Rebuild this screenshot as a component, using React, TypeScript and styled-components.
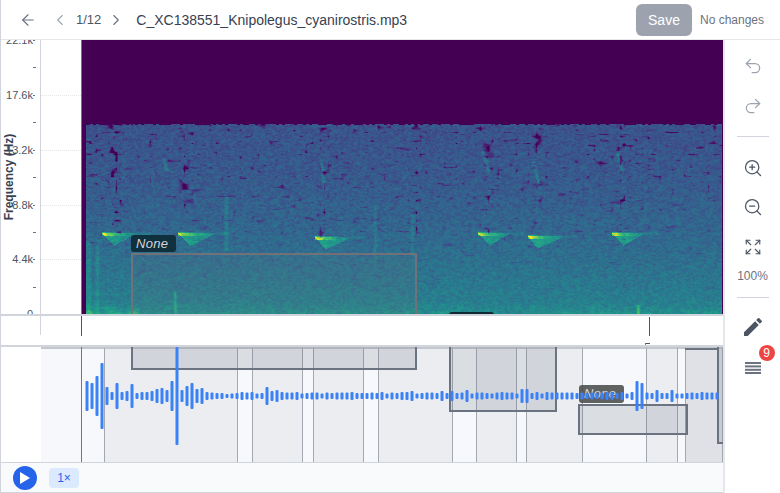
import React, { useEffect, useRef } from 'react'
import styled, { createGlobalStyle } from 'styled-components'
import { ArrowLeft, ChevronLeft, ChevronRight, Expand, Redo2, Undo2, ZoomIn, ZoomOut } from 'lucide-react'

const GlobalStyle = createGlobalStyle`
  html, body {
    margin: 0;
    padding: 0;
    background: #fff;
    font-family: "Liberation Sans", Arial, sans-serif;
  }
`

const Page = styled.div`
  width: 780px;
  height: 493px;
  display: flex;
  flex-direction: column;
  box-sizing: border-box;
  border-left: 1px solid #d1d5db;
  overflow: hidden;
`

const Header = styled.header`
  height: 40px;
  flex: none;
  box-sizing: border-box;
  display: flex;
  align-items: center;
  padding-left: 18px;
  border-bottom: 1px solid #e5e7eb;
  color: #4b5563;
`

const IconSlot = styled.span<{ $color?: string; $ml?: number }>`
  display: flex;
  color: ${(p) => p.$color ?? '#6b7280'};
  margin-left: ${(p) => p.$ml ?? 0}px;
`

const Pager = styled.span`
  font-size: 13px;
  margin: 0 6px 0 7px;
  color: #4b5563;
`

const Title = styled.span`
  font-size: 14px;
  margin-left: 11px;
  color: #374151;
  flex: 1;
`

const SaveButton = styled.button`
  width: 56px;
  height: 32px;
  border: 0;
  border-radius: 6px;
  background: #9ca3af;
  color: #fff;
  font: 14px "Liberation Sans", Arial, sans-serif;
`

const Status = styled.span`
  font-size: 12px;
  color: #6b7280;
  width: 88px;
  text-align: left;
  padding-left: 8px;
  box-sizing: border-box;
`

const Body = styled.div`
  flex: 1;
  min-height: 0;
  display: flex;
`

const Main = styled.main`
  width: 724px;
  flex: none;
  box-sizing: border-box;
  display: flex;
  flex-direction: column;
  border-right: 2px solid #e5e7eb;
`

const SpecRow = styled.div`
  height: 274px;
  flex: none;
  display: flex;
  overflow: hidden;
`

const Axis = styled.div`
  width: 40px;
  flex: none;
  box-sizing: border-box;
  position: relative;
  border-right: 1px solid #d1d5db;
`

const AxisTitle = styled.span`
  position: absolute;
  left: 8px;
  top: 137px;
  transform: translate(-50%, -50%) rotate(-90deg);
  white-space: nowrap;
  font-size: 12px;
  font-weight: 700;
  color: #374151;
`

const AxisLabel = styled.span<{ $y: number }>`
  position: absolute;
  right: 7px;
  top: ${(p) => p.$y}px;
  transform: translateY(-50%);
  font-size: 11px;
  color: #4b5563;
`

const AxisTick = styled.span<{ $y: number; $minor?: boolean }>`
  position: absolute;
  right: ${(p) => (p.$minor ? 4 : 5)}px;
  top: ${(p) => p.$y}px;
  width: ${(p) => (p.$minor ? 3 : 2)}px;
  height: 1px;
  background: #6b7280;
`

const Gutter = styled.div`
  width: 40px;
  flex: none;
  position: relative;
`

const GridLine = styled.span<{ $y: number }>`
  position: absolute;
  left: 0;
  right: 0;
  top: ${(p) => p.$y}px;
  border-top: 1px dotted #e5e7eb;
`

const SpecPane = styled.div`
  flex: 1;
  position: relative;
  border-left: 1px solid #ef4444;
`

const SpecCanvas = styled.canvas`
  display: block;
`

const SpecBox = styled.div<{ $x: number; $y: number; $w: number; $h: number }>`
  position: absolute;
  left: ${(p) => p.$x}px;
  top: ${(p) => p.$y}px;
  width: ${(p) => p.$w}px;
  height: ${(p) => p.$h}px;
  box-sizing: border-box;
  border: 2px solid #71717a;
  background: rgba(113, 113, 122, 0.14);
`

const Tag = styled.span<{ $x: number; $y: number; $w: number; $h: number; $bg: string; $fg: string }>`
  position: absolute;
  left: ${(p) => p.$x}px;
  top: ${(p) => p.$y}px;
  width: ${(p) => p.$w}px;
  height: ${(p) => p.$h}px;
  box-sizing: border-box;
  padding-left: 5px;
  border-radius: 3px;
  background: ${(p) => p.$bg};
  color: ${(p) => p.$fg};
  font-size: 13px;
  font-style: italic;
  line-height: ${(p) => p.$h}px;
  letter-spacing: 0.3px;
`

const Timeline = styled.div`
  height: 33px;
  flex: none;
  box-sizing: border-box;
  position: relative;
  border-top: 2px solid #d1d5db;
  border-bottom: 2px solid #d1d5db;
`

const TimelineEdge = styled.span`
  position: absolute;
  left: 39px;
  top: 0;
  height: 19px;
  width: 1px;
  background: #d1d5db;
`

const TimeTick = styled.span<{ $x: number; $h: number; $top: number }>`
  position: absolute;
  left: ${(p) => p.$x}px;
  top: ${(p) => p.$top}px;
  width: 1px;
  height: ${(p) => p.$h}px;
  background: #4b5563;
`

const TimeText = styled.span`
  position: absolute;
  left: 644px;
  top: 27px;
  width: 5px;
  height: 2px;
  border-top: 1px solid #57534e;
  border-left: 1px solid #d97706;
  box-sizing: border-box;
`

const Wave = styled.div`
  height: 115px;
  flex: none;
  display: flex;
  position: relative;
  overflow: hidden;
`

const WaveGap = styled.div`
  width: 40px;
  flex: none;
`

const WaveTrack = styled.div`
  flex: 1;
  position: relative;
  display: flex;
  background: #f7f8fb;
`

const Band = styled.div<{ $w: number; $tone: 'light' | 'mid' | 'dark' }>`
  width: ${(p) => p.$w}px;
  flex: none;
  box-sizing: border-box;
  border-right: 1px solid #a3a7b0;
  border-top: 2px solid #c4c7ce;
  background: ${(p) =>
    p.$tone === 'light' ? '#f7f8fb' : p.$tone === 'mid' ? '#ecedf1' : '#dfe1e6'};
`

const RedLine = styled.span`
  position: absolute;
  left: 80px;
  top: 0;
  bottom: 0;
  width: 1px;
  background: #dc4a4a;
`

const WaveBox = styled.div<{ $x: number; $y: number; $w: number; $h: number }>`
  position: absolute;
  left: ${(p) => p.$x}px;
  top: ${(p) => p.$y}px;
  width: ${(p) => p.$w}px;
  height: ${(p) => p.$h}px;
  box-sizing: border-box;
  border: 2px solid #6b7280;
  background: rgba(107, 114, 128, 0.2);
`

const WaveEdge = styled.span<{ $x: number; $y: number; $w: number }>`
  position: absolute;
  left: ${(p) => p.$x}px;
  top: ${(p) => p.$y}px;
  width: ${(p) => p.$w}px;
  height: 2px;
  background: #6b7280;
`

const WaveSvg = styled.svg`
  position: absolute;
  left: 0;
  top: 0;
`

const Footer = styled.footer`
  height: 31px;
  flex: none;
  box-sizing: border-box;
  display: flex;
  align-items: center;
  padding-left: 12px;
  gap: 12px;
  background: #f9fafb;
  border-top: 1px solid #d1d5db;
  border-bottom: 1px solid #d1d5db;
`

const PlayButton = styled.span`
  width: 24px;
  height: 24px;
  border-radius: 50%;
  background: #2563eb;
  display: flex;
  align-items: center;
  justify-content: center;
`

const SpeedChip = styled.span`
  width: 30px;
  height: 20px;
  border-radius: 4px;
  background: #dbeafe;
  color: #2563eb;
  font-size: 12px;
  line-height: 20px;
  text-align: center;
`

const Toolbar = styled.aside`
  flex: 1;
  display: flex;
  flex-direction: column;
  align-items: center;
  padding-top: 14px;
  color: #4b5563;
`

const ToolSlot = styled.div<{ $h: number; $muted?: boolean; $mt?: number }>`
  height: ${(p) => p.$h}px;
  margin-top: ${(p) => p.$mt ?? 0}px;
  flex: none;
  display: flex;
  align-items: center;
  justify-content: center;
  position: relative;
  color: ${(p) => (p.$muted ? '#9ca3af' : '#4b5563')};
`

const Divider = styled.hr<{ $mt: number }>`
  width: 32px;
  margin: ${(p) => p.$mt}px 0 0;
  border: 0;
  border-top: 1px solid #d1d5db;
`

const Percent = styled.span`
  font-size: 12px;
  color: #6b7280;
  line-height: 14px;
  margin-top: 12px;
`

const Badge = styled.span`
  position: absolute;
  left: 14px;
  top: -11px;
  width: 16px;
  height: 16px;
  border-radius: 50%;
  background: #ef4444;
  color: #fff;
  font-size: 12px;
  line-height: 16px;
  text-align: center;
`

const viridis = [
  [68, 1, 84],
  [72, 40, 120],
  [62, 74, 137],
  [49, 104, 142],
  [38, 130, 142],
  [31, 158, 137],
  [53, 183, 121],
  [110, 206, 88],
  [253, 231, 37],
]

const colorAt = (v: number) => {
  const t = Math.max(0, Math.min(0.9999, v)) * (viridis.length - 1)
  const i = Math.floor(t)
  const f = t - i
  return viridis[i].map((c, k) => c + (viridis[i + 1][k] - c) * f)
}

const hash = (x: number, y: number) => {
  let h = (Math.imul(x, 374761393) + Math.imul(y, 668265263)) | 0
  h = Math.imul(h ^ (h >>> 13), 1274126177)
  return ((h ^ (h >>> 16)) >>> 0) / 4294967296
}

const smooth = (x: number, y: number) => {
  const xi = Math.floor(x)
  const yi = Math.floor(y)
  const fx = x - xi
  const fy = y - yi
  const a = hash(xi, yi) * (1 - fx) + hash(xi + 1, yi) * fx
  const b = hash(xi, yi + 1) * (1 - fx) + hash(xi + 1, yi + 1) * fx
  return a * (1 - fy) + b * fy
}

// bird calls, x and y in page coordinates
const calls = [
  { x: 102, y: 233, len: 34, apex: 12 },
  { x: 178, y: 233, len: 38, apex: 12 },
  { x: 315, y: 237, len: 36, apex: 10 },
  { x: 478, y: 233, len: 32, apex: 11 },
  { x: 528, y: 236, len: 36, apex: 9 },
  { x: 612, y: 233, len: 32, apex: 11 },
]
const streaks = [
  { x: 226, top: 195, bottom: 250, a: 0.1, slope: 0 },
  { x: 175, top: 292, bottom: 314, a: 0.2, slope: 0 },
  { x: 97, top: 240, bottom: 314, a: 0.1, slope: 0 },
  { x: 375, top: 205, bottom: 265, a: 0.08, slope: 0 },
  { x: 412, top: 215, bottom: 255, a: 0.09, slope: 0 },
  { x: 483, top: 151, bottom: 170, a: 0.16, slope: 0.25 },
  { x: 321, top: 160, bottom: 182, a: 0.13, slope: 0.1 },
  { x: 533, top: 159, bottom: 184, a: 0.16, slope: 0.2 },
  { x: 617, top: 151, bottom: 170, a: 0.17, slope: 0.25 },
  { x: 163, top: 158, bottom: 170, a: 0.15, slope: 0.3 },
  { x: 638, top: 305, bottom: 314, a: 0.22, slope: 0 },
]
const holes = [111, 118, 184, 323, 416, 488, 537, 622]

const drawSpectrogram = (canvas: HTMLCanvasElement) => {
  const ctx = canvas.getContext('2d')
  if (!ctx) return
  const W = canvas.width
  const H = canvas.height
  const img = ctx.createImageData(W, H)
  for (let py = 0; py < H; py++) {
    for (let px = 0; px < W; px++) {
      const x = px + 82
      const y = py + 40
      const edge = 124 + (hash(Math.floor(x / 3), 3) > 0.6 ? 1 : 0)
      let v = 0
      if (y >= edge && x >= 86 && x < 722) {
        const d = (y - 124) / 190
        v = 0.29 + d * d * 0.17 + d * 0.05
        v += (smooth(x / 2.2, y / 1.4) - 0.5) * 0.14
        v += (hash(x, y) - 0.5) * 0.05
        // short dark dashes, the quiet bits of the recording
        const dash = smooth(x / 6, y / 2.2)
        if (dash < 0.24) v -= (0.24 - dash) * 1.3 * (1.1 - d)
        if (x < 91 && y > 240) v += 0.08
        for (const h of holes) {
          const off = Math.abs(x - h)
          if (off < 7 && y < 240) {
            const n = smooth(x / 4, y / 4)
            if (n < 0.36) v -= (0.36 - n) * 1.5 * (1 - off / 7)
          }
        }
        for (const s of streaks) {
          if (y >= s.top && y <= s.bottom) {
            const dx = Math.abs(x - s.x - (y - s.top) * s.slope)
            if (dx < 3) v += s.a * (1 - dx / 3)
          }
        }
        for (const c of calls) {
          const dx = x - c.x
          const dy = y - c.y
          if (dx >= 0 && dx < c.len) {
            const depth = dx < c.apex ? (dx / c.apex) * 12 : 12 * (1 - (dx - c.apex) / (c.len - c.apex))
            if (dy >= 0 && dy <= depth) v += 0.26 - (dx / c.len) * 0.1
            if (dy >= -1 && dy <= 2) {
              const f = 1 - dx / c.len
              v += 0.38 * f * f
            }
          } else if (dx >= c.len && dx < c.len + 14 && Math.abs(dy) < 2) {
            v += 0.07
          }
        }
        if (y > 303) {
          const b = smooth(x / 4, y / 6)
          v += (y - 303) * 0.01 * b * (x < 140 ? 2.6 : 1)
        }
      }
      const [r, g, b] = colorAt(v)
      const i = (py * W + px) * 4
      img.data[i] = r
      img.data[i + 1] = g
      img.data[i + 2] = b
      img.data[i + 3] = 255
    }
  }
  ctx.putImageData(img, 0, 0)
}

const Spectrogram = () => {
  const ref = useRef<HTMLCanvasElement>(null)
  useEffect(() => {
    if (ref.current) drawSpectrogram(ref.current)
  }, [])
  return <SpecCanvas ref={ref} width={641} height={274} />
}

const leadBars = [
  30, 26, 40, 66, 18, 8, 26, 8, 10, 24, 6, 8, 8, 10, 14, 16, 12, 30, 98, 12, 20, 26, 14, 16, 8, 7, 6, 6, 4, 5, 6, 8, 7, 8, 5,
]
const spikes: Record<number, number> = {
  262: 6, 267: 18, 272: 10, 277: 12, 282: 8, 412: 10, 467: 12, 452: 10, 442: 10, 522: 14, 527: 14,
  632: 8, 637: 30, 642: 26, 647: 7, 652: 6, 657: 12, 662: 6, 667: 6, 672: 12,
}
const bars = Array.from({ length: 127 }, (_, i) => {
  const x = 87 + i * 5
  const h = i < leadBars.length ? leadBars[i] : spikes[x] ?? 5 + Math.round(hash(i, 9) * 3)
  return { x, h }
})

const yTicks = [
  { y: 0, label: '22.1k' },
  { y: 55, label: '17.6k' },
  { y: 110, label: '13.2k' },
  { y: 165, label: '8.8k' },
  { y: 219, label: '4.4k' },
  { y: 274, label: '0' },
]
const minorTicks = [27, 82, 137, 192, 247]

const bands: { w: number; tone: 'light' | 'mid' | 'dark' }[] = [
  { w: 64, tone: 'light' },
  { w: 133, tone: 'mid' },
  { w: 15, tone: 'light' },
  { w: 50, tone: 'mid' },
  { w: 11, tone: 'light' },
  { w: 50, tone: 'mid' },
  { w: 15, tone: 'light' },
  { w: 74, tone: 'mid' },
  { w: 24, tone: 'light' },
  { w: 40, tone: 'mid' },
  { w: 10, tone: 'light' },
  { w: 56, tone: 'mid' },
  { w: 64, tone: 'light' },
  { w: 31, tone: 'mid' },
  { w: 8, tone: 'light' },
  { w: 37, tone: 'dark' },
]

const PencilIcon = () => (
  <svg width="24" height="24" viewBox="0 0 24 24" fill="currentColor">
    <path d="M3 17.25V21h3.75L17.81 9.94l-3.75-3.75L3 17.25zM20.71 7.04a1 1 0 0 0 0-1.41l-2.34-2.34a1 1 0 0 0-1.41 0l-1.83 1.83 3.75 3.75 1.83-1.83z" />
  </svg>
)

const ListIcon = () => (
  <svg width="16" height="12" viewBox="0 0 16 12" fill="#6b7280">
    <rect y="0" width="16" height="2" />
    <rect y="3.4" width="16" height="2" />
    <rect y="6.8" width="16" height="2" />
    <rect y="10" width="16" height="2" />
  </svg>
)

const PlayIcon = () => (
  <svg width="12" height="14" viewBox="0 0 12 14" fill="#fff">
    <path d="M1 1v12l10-6z" />
  </svg>
)

const App = (): JSX.Element => {
  return (
    <Page>
      <GlobalStyle />
      <Header>
        <IconSlot><ArrowLeft size={18} strokeWidth={1.5} /></IconSlot>
        <IconSlot $color="#9ca3af" $ml={14}><ChevronLeft size={18} strokeWidth={1.5} /></IconSlot>
        <Pager>1/12</Pager>
        <IconSlot><ChevronRight size={18} strokeWidth={1.5} /></IconSlot>
        <Title>C_XC138551_Knipolegus_cyanirostris.mp3</Title>
        <SaveButton>Save</SaveButton>
        <Status>No changes</Status>
      </Header>
      <Body>
        <Main>
          <SpecRow>
            <Axis>
              <AxisTitle>Frequency (Hz)</AxisTitle>
              {yTicks.map((t) => (
                <React.Fragment key={t.label}>
                  <AxisLabel $y={t.y}>{t.label}</AxisLabel>
                  <AxisTick $y={t.y} />
                </React.Fragment>
              ))}
              {minorTicks.map((y) => (
                <AxisTick key={y} $y={y} $minor />
              ))}
            </Axis>
            <Gutter>
              {yTicks.slice(1, 5).map((t) => (
                <GridLine key={t.y} $y={t.y} />
              ))}
            </Gutter>
            <SpecPane>
              <Spectrogram />
              <SpecBox $x={49} $y={213} $w={286} $h={70} />
              <Tag $x={49} $y={195} $w={45} $h={17} $bg="#11303d" $fg="#d1d5db">None</Tag>
              <Tag $x={367} $y={272} $w={45} $h={17} $bg="#0f2a33" $fg="#d1d5db" />
            </SpecPane>
          </SpecRow>
          <Timeline>
            <TimelineEdge />
            <TimeTick $x={80} $h={20} $top={0} />
            <TimeTick $x={648} $h={19} $top={1} />
            <TimeText />
          </Timeline>
          <Wave>
            <WaveGap />
            <WaveTrack>
              {bands.map((b, i) => (
                <Band key={i} $w={b.w} $tone={b.tone} />
              ))}
              <WaveBox $x={90} $y={-10} $w={286} $h={33} />
              <WaveBox $x={408} $y={-10} $w={108} $h={75} />
              <WaveBox $x={537} $y={57} $w={110} $h={31} />
              <WaveEdge $x={644} $y={1} $w={34} />
              <WaveBox $x={676} $y={-10} $w={10} $h={107} />
              <Tag $x={538} $y={38} $w={45} $h={18} $bg="rgba(75, 75, 75, 0.88)" $fg="#d1d5db">None</Tag>
            </WaveTrack>
            <RedLine />
            <WaveSvg width="722" height="115">
              {bars.map((b) => (
                <rect
                  key={b.x}
                  x={b.x - 2.5}
                  y={49 - b.h / 2}
                  width={3}
                  height={b.h}
                  rx={1}
                  fill="#3b82f6"
                />
              ))}
            </WaveSvg>
          </Wave>
          <Footer>
            <PlayButton><PlayIcon /></PlayButton>
            <SpeedChip>1×</SpeedChip>
          </Footer>
        </Main>
        <Toolbar>
          <ToolSlot $h={24} $muted><Undo2 size={20} strokeWidth={1.5} /></ToolSlot>
          <ToolSlot $h={56} $muted><Redo2 size={20} strokeWidth={1.5} /></ToolSlot>
          <Divider $mt={2} />
          <ToolSlot $h={61}><ZoomIn size={20} strokeWidth={1.5} /></ToolSlot>
          <ToolSlot $h={18}><ZoomOut size={20} strokeWidth={1.5} /></ToolSlot>
          <ToolSlot $h={20} $mt={21}><Expand size={18} strokeWidth={1.5} /></ToolSlot>
          <Percent>100%</Percent>
          <Divider $mt={14} />
          <ToolSlot $h={58}><PencilIcon /></ToolSlot>
          <ToolSlot $h={24}><ListIcon /><Badge>9</Badge></ToolSlot>
        </Toolbar>
      </Body>
    </Page>
  )
}

export default App
